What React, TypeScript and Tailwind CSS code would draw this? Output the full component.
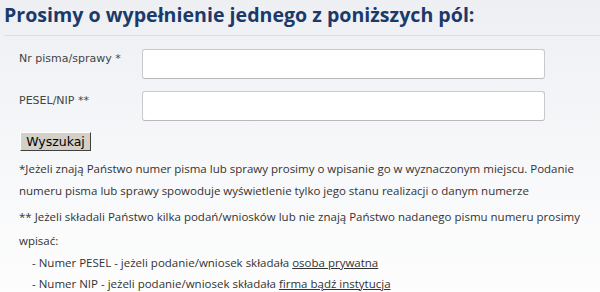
import React from 'react';

const bodyFont = { fontFamily: '"Open Sans", "Noto Sans", sans-serif' };
const labelFont = { fontFamily: '"DejaVu Sans", Verdana, sans-serif' };

const Field: React.FC<{ label: string }> = ({ label }) => (
  <div className="flex items-start">
    <label className="w-[123px] pt-[2px] text-[11px] leading-[16px] text-[#444]" style={labelFont}>
      {label}
    </label>
    <input
      type="text"
      className="w-[403px] h-[30px] rounded-[3px] border border-[#c9c9c9] border-b-[#b9b9b9] bg-white px-2 outline-none"
    />
  </div>
);

export default function App() {
  return (
    <div className="w-[600px] h-[292px] overflow-hidden bg-gradient-to-b from-[#eeeff3] via-[#f6f7f9] to-[#fdfdfd]">
      {/* nagłówek */}
      <h1
        className="pl-[4px] pt-[1px] text-[19.6px] leading-[28px] font-bold text-[#1b3a6a]"
        style={{ fontFamily: '"Open Sans", sans-serif' }}
      >
        Prosimy o wypełnienie jednego z poniższych pól:
      </h1>
      <div className="ml-[4px] mt-[6px] border-b border-[#dcdde2]" />

      {/* formularz */}
      <div className="pl-[19px] pt-[13px] flex flex-col gap-[12px]">
        <Field label="Nr pisma/sprawy *" />
        <Field label="PESEL/NIP **" />
      </div>

      <div className="pl-[20px] pt-[11px] flex">
        <button
          className="h-[19px] w-[71px] bg-[#d4d0c8] border border-t-white border-l-white border-r-[#404040] border-b-[#404040] text-[12.5px] leading-[15px] text-black"
          style={labelFont}
        >
          Wyszukaj
        </button>
      </div>

      {/* objaśnienia */}
      <div className="pl-[19px] pr-[3px] text-[11.5px] text-[#333]" style={bodyFont}>
        <p className="pt-[7px] leading-[22px]">
          *Jeżeli znają Państwo numer pisma lub sprawy prosimy o wpisanie go w wyznaczonym miejscu. Podanie numeru
          pisma lub sprawy spowoduje wyświetlenie tylko jego stanu realizacji o danym numerze
        </p>
        <p className="pt-[3px] leading-[24px]">
          ** Jeżeli składali Państwo kilka podań/wniosków lub nie znają Państwo nadanego pismu numeru prosimy wpisać:
        </p>
        <ul className="pl-[13px] leading-[20.5px]">
          <li>
            - Numer PESEL - jeżeli podanie/wniosek składała <span className="underline">osoba prywatna</span>
          </li>
          <li>
            - Numer NIP - jeżeli podanie/wniosek składała <span className="underline">firma bądź instytucja</span>
          </li>
        </ul>
      </div>
    </div>
  );
}
